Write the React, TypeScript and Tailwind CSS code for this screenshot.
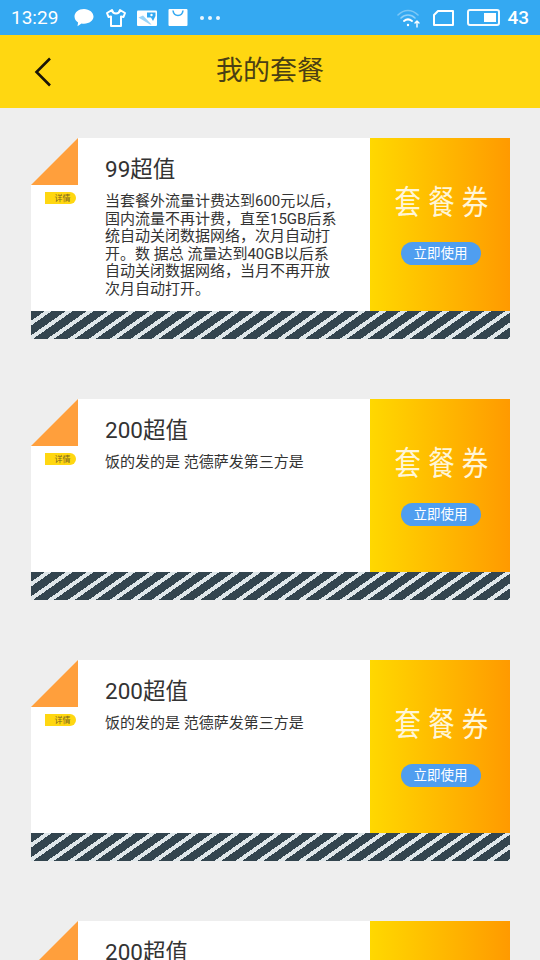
type Plan = { title: string; desc: string[] };

const plans: Plan[] = [
  {
    title: "99超值",
    desc: [
      "当套餐外流量计费达到600元以后，",
      "国内流量不再计费，直至15GB后系",
      "统自动关闭数据网络，次月自动打",
      "开。数 据总 流量达到40GB以后系",
      "自动关闭数据网络，当月不再开放",
      "次月自动打开。",
    ],
  },
  { title: "200超值", desc: ["饭的发的是 范德萨发第三方是"] },
  { title: "200超值", desc: ["饭的发的是 范德萨发第三方是"] },
  { title: "200超值", desc: ["饭的发的是 范德萨发第三方是"] },
];

function StatusBar() {
  return (
    <div className="flex h-[35px] shrink-0 items-center bg-[#34a9f2] pl-[11px] pr-[11px] text-white">
      <span className="w-[52px] text-[19px] leading-none">13:29</span>
      <svg width="22" height="20" viewBox="0 0 22 20" className="ml-[10px]" fill="white">
        <path d="M11 1C5.500 1 1.500 4.400 1.500 8.600c0 2.500 1.400 4.600 3.600 6l-.6 3.600 4-2.600c.8.100 1.600.2 2.500.2 5.500 0 9.500-3.400 9.500-7.200S16.500 1 11 1z" />
      </svg>
      <svg width="22" height="20" viewBox="0 0 22 20" className="ml-[10px]" fill="none" stroke="white" strokeWidth="2" strokeLinejoin="round">
        <path d="M7 2 2 5l1.500 4L6 8.500V18h10V8.500L18.500 9 20 5l-5-3c-.5 2.500-2 3.500-4 3.500S7.500 4.500 7 2z" />
      </svg>
      <svg width="22" height="18" viewBox="0 0 22 18" className="ml-[9px]">
        <rect x="1" y="1.500" width="20" height="15.500" rx="1" fill="white" />
        <path d="M11 3.500h8.500v3.500l-2.500 5-2-3.500h-4z" fill="#34a9f2" />
        <path d="M2.500 8.500 7 6.500l8.500 9h-1.500z" fill="#34a9f2" opacity="0.5" />
        <circle cx="15.500" cy="6" r="1.200" fill="white" />
      </svg>
      <svg width="20" height="20" viewBox="0 0 20 20" className="ml-[10px]">
        <rect x="0.500" y="1" width="19" height="17" rx="1" fill="white" />
        <path d="M5 2.500c.5 3.500 2.500 5 5 5s4.500-1.500 5-5" fill="none" stroke="#34a9f2" strokeWidth="1.600" />
      </svg>
      <div className="ml-[12px] flex gap-[4px]">
        <span className="h-[4px] w-[4px] rounded-full bg-white/90" />
        <span className="h-[4px] w-[4px] rounded-full bg-white/90" />
        <span className="h-[4px] w-[4px] rounded-full bg-white/90" />
      </div>
      <div className="flex-1" />
      <svg width="24" height="20" viewBox="0 0 24 20" fill="none" stroke="white" strokeLinecap="round">
        <path d="M1 7c6-6 14-6 20 0" strokeWidth="1.600" opacity="0.35" />
        <path d="M4 10c4-4 10-4 14 0" strokeWidth="1.600" opacity="0.45" />
        <path d="M7 13c2.500-2 5.500-2 8 0" strokeWidth="2" />
        <circle cx="11" cy="17" r="1.200" fill="white" stroke="none" />
        <path d="M20 19v-6M18 15l2-2 2 2" strokeWidth="1.400" />
      </svg>
      <svg width="22" height="18" viewBox="0 0 22 18" className="ml-[11px]" fill="none" stroke="white" strokeWidth="2" strokeLinejoin="round">
        <path d="M6 2h15v14H2V6z" />
      </svg>
      <div className="ml-[13px] flex h-[17px] w-[33px] items-center justify-end rounded-[3px] border-2 border-white/95 p-[2px]">
        <div className="h-full w-[12px] bg-white" />
      </div>
      <span className="ml-[7px] text-[19px] font-medium leading-none">43</span>
    </div>
  );
}

function Header() {
  return (
    <div className="grid h-[73px] shrink-0 grid-cols-[1fr_auto_1fr] items-center bg-[#ffd711]">
      <svg width="18" height="30" viewBox="0 0 18 30" className="ml-[34px]" fill="none" stroke="#1a1408" strokeWidth="2.600">
        <path d="M16 1.500 2.500 15 16 28.500" />
      </svg>
      <span className="text-[27px] leading-none text-[#4a3f14]">我的套餐</span>
    </div>
  );
}

function PlanCard({ plan }: { plan: Plan }) {
  return (
    <div className="flex h-[201px] w-[479px] shrink-0 flex-col">
      <div className="flex h-[173px]">
        <div className="flex w-[47px] shrink-0 flex-col">
          <svg width="47" height="47" viewBox="0 0 47 47" className="block shrink-0">
            <polygon points="47,0 47,47 0,47" fill="#ff9f3c" />
          </svg>
          <div className="flex-1 bg-white pl-[14px] pt-[7px]">
            <div className="flex h-[12px] w-[31px] items-center justify-center rounded-r-full bg-[#ffd711] pl-[4px] pt-[1px] text-[8px] leading-none text-[#7a6420]">
              详情
            </div>
          </div>
        </div>
        <div className="flex-1 bg-white pl-[27px] pt-[16px]">
          <div className="text-[22.500px] leading-[30px] text-[#333]">{plan.title}</div>
          <div className="mt-[9px] text-[15px] leading-[17.500px] text-[#333]">
            {plan.desc.map((line) => (
              <div key={line} className="whitespace-nowrap">
                {line}
              </div>
            ))}
          </div>
        </div>
        <div className="flex w-[140px] shrink-0 flex-col items-center bg-gradient-to-r from-[#ffd800] to-[#ff9a00] pt-[45px]">
          <div className="ml-[9px] scale-x-[0.8] whitespace-nowrap font-['Liberation_Serif','Noto_Sans_CJK_SC',serif] text-[33px] leading-[40px] tracking-[9px] text-[#fff6d8]">
            套餐券
          </div>
          <div className="ml-[1px] mt-[19px] flex h-[23px] w-[80px] items-center justify-center rounded-full bg-[#4f9ef0] text-[13.500px] leading-none text-white">
            立即使用
          </div>
        </div>
      </div>
      <div className="h-[28px] bg-[repeating-linear-gradient(145deg,#33454f_0,#33454f_8px,#dfe7ea_8px,#dfe7ea_12px)]" />
    </div>
  );
}

export default function App() {
  return (
    <div className="flex h-[960px] w-[540px] flex-col overflow-hidden bg-[#eeeeee] font-['Roboto','Noto_Sans_CJK_SC',sans-serif]">
      <StatusBar />
      <Header />
      <div className="flex flex-col gap-[60px] pl-[31px] pt-[30px]">
        {plans.map((plan, i) => (
          <PlanCard key={i} plan={plan} />
        ))}
      </div>
    </div>
  );
}
